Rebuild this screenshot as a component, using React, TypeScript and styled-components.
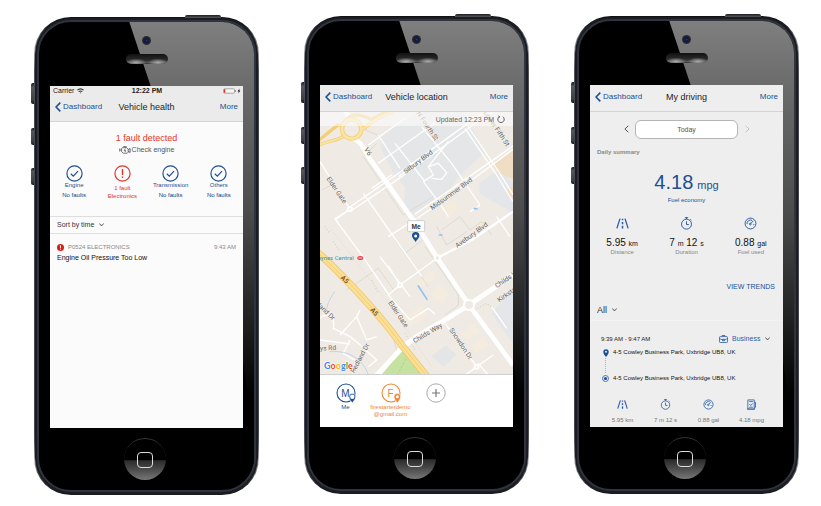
import React from 'react';
import styled, { createGlobalStyle } from 'styled-components';

const BLUE = '#1c4f94';
const RED = '#e2352a';
const ORANGE = '#ee8532';

const GlobalStyle = createGlobalStyle`
  *, *::before, *::after { box-sizing: border-box; }
  body {
    margin: 0;
    background: #fff;
    color: #222;
    font-family: "Liberation Sans", Arial, Helvetica, sans-serif;
  }
  button, select {
    margin: 0;
    padding: 0;
    border: 0;
    background: none;
    font: inherit;
    color: inherit;
  }
  svg { display: block; flex: none; }
  h1, h2, p, ul, dl, dd, dt { margin: 0; padding: 0; font-weight: 400; }
  ul { list-style: none; }
`;

/* ---------- device ---------- */

const Page = styled.main`
  display: flex;
  align-items: flex-start;
  gap: 45px;
  padding: 16px 22px 12px 34px;
`;

const Device = styled.article<{ $lowered?: boolean }>`
  position: relative;
  flex: 1 1 0;
  min-width: 0;
  margin-top: ${(p) => (p.$lowered ? '1px' : '0')};
  padding: 3px;
  border-radius: 37px;
  background: linear-gradient(
    #101114 0, #1b1c20 2%, #5e6066 4%, #a5a7ab 7%, #55585f 11%, #45484f 18%,
    #45484f 86%, #55585f 89%, #b0b1b4 93%, #4a4b50 96%, #1b1a1e 99%
  );
`;

const SideKey = styled.span<{ $top: number; $size: number }>`
  position: absolute;
  left: -3px;
  top: ${(p) => p.$top}px;
  width: 3px;
  height: ${(p) => p.$size}px;
  border-radius: 2px 0 0 2px;
  background: linear-gradient(#17181b, #55585e 20%, #3d4046 80%, #17181b);
`;

const PowerKey = styled.span`
  position: absolute;
  right: 38px;
  top: -2px;
  width: 36px;
  height: 3px;
  border-radius: 2px 2px 0 0;
  background: linear-gradient(#1d1e22, #55585d);
`;

const Bezel = styled.div`
  position: relative;
  padding: 0 11px;
  border: 2px solid #30343f;
  border-radius: 34px;
  background: #000;
  box-shadow: 0 0 0 2px #1b1d22;
  overflow: hidden;

  &::before {
    content: '';
    position: absolute;
    inset: 0;
    background: linear-gradient(#7f7f7f, #6b6b6b 14%, #4d4d4d 40%, #242424 62%, #000 80%);
    clip-path: polygon(42% 0, 100% 0, 100% 100%, 97% 80%, 95% 73%);
  }
`;

const Head = styled.div`
  position: relative;
  display: flex;
  flex-direction: column;
  align-items: center;
  gap: 9px;
  height: 64px;
  padding-top: 14px;
`;

const Camera = styled.span`
  width: 9px;
  height: 9px;
  border-radius: 50%;
  background: radial-gradient(circle, #2335a0 0, #10153f 25%, #1d1f29 45%, #30313a 70%);
`;

const Speaker = styled.span`
  width: 42px;
  height: 10px;
  border-radius: 5px;
  background:
    radial-gradient(ellipse 10px 4px at 24% 85%, #a8a8a8, transparent),
    radial-gradient(ellipse 10px 4px at 76% 85%, #a8a8a8, transparent),
    linear-gradient(#111 0, #2a2a2a 60%, #555 85%, #333);
`;

const Foot = styled.div`
  position: relative;
  display: grid;
  place-items: center;
  height: 62px;
  padding-right: 3px;
`;

const HomeKey = styled.button`
  display: grid;
  place-items: center;
  width: 42px;
  height: 42px;
  border-radius: 50%;
  border-top: 1px solid #333;
  background: linear-gradient(#000 0 50%, #2c2c2c 53%, #444 70%, #777 100%);

  &::after {
    content: '';
    width: 16px;
    height: 16px;
    border: 1px solid #ddd;
    border-radius: 4px;
  }
`;

const Screen = styled.section<{ $tone: string }>`
  position: relative;
  display: flex;
  flex-direction: column;
  min-height: 342px;
  background: ${(p) => p.$tone};
`;

const Phone = ({
  tone,
  lowered,
  label,
  children,
}: {
  tone: string;
  lowered?: boolean;
  label: string;
  children: React.ReactNode;
}) => (
  <Device $lowered={lowered}>
    <PowerKey />
    <SideKey $top={66} $size={21} />
    <SideKey $top={111} $size={17} />
    <SideKey $top={151} $size={17} />
    <Bezel>
      <Head>
        <Camera />
        <Speaker />
      </Head>
      <Screen $tone={tone} aria-label={label}>
        {children}
      </Screen>
      <Foot>
        <HomeKey type="button" aria-label="Home" />
      </Foot>
    </Bezel>
  </Device>
);

/* ---------- navigation ---------- */

const StatusBar = styled.div`
  display: grid;
  grid-template-columns: 1fr auto 1fr;
  align-items: center;
  height: 9px;
  padding: 0 2px 0 3px;
  background: #ebebeb;
  color: #222;
  font-size: 7px;
  line-height: 9px;

  b { font-size: 7px; }
`;

const StatusSide = styled.span<{ $end?: boolean }>`
  display: flex;
  align-items: center;
  gap: 3px;
  justify-content: ${(p) => (p.$end ? 'flex-end' : 'flex-start')};
`;

const NavBar = styled.header<{ $tone?: string }>`
  display: grid;
  grid-template-columns: 1fr auto 1fr;
  align-items: center;
  height: 27px;
  padding: 0 5px 2px;
  border-bottom: 1px solid #d4d4d6;
  background: ${(p) => p.$tone ?? '#ebebeb'};
`;

const NavTitle = styled.h1`
  font-size: 9px;
  line-height: 12px;
  color: #1c1c1c;
`;

const NavLink = styled.a<{ $end?: boolean }>`
  display: flex;
  align-items: center;
  gap: 2px;
  justify-self: ${(p) => (p.$end ? 'end' : 'start')};
  color: ${BLUE};
  font-size: 8px;
  line-height: 12px;
  text-decoration: none;
`;

const Nav = ({ title, tone }: { title: string; tone?: string }) => (
  <NavBar $tone={tone}>
    <NavLink href="#dashboard">
      <svg width="6" height="10" viewBox="0 0 6 10" fill="none" stroke={BLUE} strokeWidth="1.6">
        <path d="M5.3.6 1 5l4.3 4.4" />
      </svg>
      Dashboard
    </NavLink>
    <NavTitle>{title}</NavTitle>
    <NavLink $end href="#more">More</NavLink>
  </NavBar>
);

const Chevron = ({ color = '#333' }: { color?: string }) => (
  <svg width="5" height="4" viewBox="0 0 5 4" fill="none" stroke={color} strokeWidth="1">
    <path d="M.4.8c1 .9 1.300 1.300 2.100 1.600C3.300 2.100 3.700 1.700 4.600.8" />
  </svg>
);

const Picker = styled.label<{ $size?: number; $color?: string }>`
  display: inline-flex;
  align-items: center;
  gap: 4px;
  color: ${(p) => p.$color ?? '#333'};
  font-size: ${(p) => p.$size ?? 7}px;
  line-height: 10px;

  select {
    appearance: none;
    outline: 0;
  }
`;

/* ---------- vehicle health ---------- */

const Summary = styled.div`
  display: flex;
  flex-direction: column;
  align-items: center;
  gap: 1px;
  padding-top: 10px;
`;

const Alert = styled.h2`
  color: ${RED};
  font-size: 9px;
  line-height: 12px;
`;

const Hint = styled.p`
  display: flex;
  align-items: center;
  gap: 1px;
  color: #555;
  font-size: 7px;
  line-height: 10px;
`;

const Systems = styled.ul`
  display: grid;
  grid-template-columns: repeat(4, 1fr);
  height: 51px;
  margin-top: 10px;
`;

const System = styled.li<{ $fault?: boolean }>`
  display: flex;
  flex-direction: column;
  align-items: center;
  gap: ${(p) => (p.$fault ? '0' : '2px')};
  color: ${(p) => (p.$fault ? RED : BLUE)};
  font-size: 6px;
  line-height: 8px;

  svg { margin-bottom: ${(p) => (p.$fault ? '2px' : '-3px')}; }
  span:last-child { color: ${(p) => (p.$fault ? RED : '#0f3d80')}; }
`;

const SortRow = styled.div`
  display: flex;
  align-items: center;
  height: 18px;
  padding-left: 7px;
  border-top: 1px solid #dedee0;
  border-bottom: 1px solid #dedee0;
`;

const Fault = styled.div`
  display: grid;
  gap: 1px;
  padding: 8px 7px 0;
`;

const FaultMeta = styled.div`
  display: flex;
  align-items: center;
  gap: 4px;
  color: #888;
  font-size: 6px;
  line-height: 10px;

  time { margin-left: auto; }
`;

const FaultTitle = styled.h2`
  color: #111;
  font-size: 7px;
  line-height: 9px;
`;

const SystemMark = ({ fault }: { fault?: boolean }) => (
  <svg width="17" height="17" viewBox="0 0 17 17" fill="none" stroke={fault ? RED : BLUE} strokeWidth="1.200">
    <circle cx="8.500" cy="8.500" r="7.600" />
    {fault ? <path d="M8.500 4v6M8.500 11.500v1.500" strokeWidth="1.400" /> : <path d="m4.800 8.800 2.500 2.300 4.700-5" />}
  </svg>
);

const systems = [
  { top: 'Engine', bottom: 'No faults' },
  { top: '1 fault', bottom: 'Electronics', fault: true },
  { top: 'Transmission', bottom: 'No faults' },
  { top: 'Others', bottom: 'No faults' },
];

const HealthScreen = () => (
  <Phone tone="#fbfbfb" lowered label="Vehicle health">
    <StatusBar>
      <StatusSide>
        Carrier
        <svg width="7" height="6" viewBox="0 0 7 6" fill="none" stroke="#333" strokeWidth="1.100">
          <path d="M.4 2.200c2-1.800 4.200-1.800 6.200 0M1.700 3.700c1.200-1 2.400-1 3.600 0" />
          <path d="M2.700 4.500h1.600L3.500 5.600z" fill="#333" stroke="none" />
        </svg>
      </StatusSide>
      <b>12:22 PM</b>
      <StatusSide $end>
        <svg width="18" height="6" viewBox="0 0 18 6">
          <rect x=".5" y=".8" width="11" height="4.400" rx="1" fill="#f6f6f6" stroke="#888" strokeWidth=".7" />
          <path d="M1 1.200h1.300v3.600H1z" fill={RED} />
          <path d="M12.200 2.200h.8v1.600h-.8z" fill="#666" />
          <path d="m16.500.6-1.900 2.800h1.200l-.4 2 1.900-2.800h-1.200z" fill="#111" />
        </svg>
      </StatusSide>
    </StatusBar>
    <Nav title="Vehicle health" />
    <Summary>
      <Alert>1 fault detected</Alert>
      <Hint>
        <svg width="12" height="8" viewBox="0 0 12 8" fill="none" stroke="#555" strokeWidth=".8">
          <path d="M4.300.6h3.400M6 .6v1M3.200 1.700h4.600l1.400 1.500v3l-1 1H4.300L2.600 5.600V2.400zM2.600 4H.8M.7 2.500v3M9.200 3.500h1v-.8h1v3.600h-1v-.8h-1" />
          <path d="m6.300 2.700-1 1.800h1.300l-.6 1.600" />
        </svg>
        Check engine
      </Hint>
    </Summary>
    <Systems>
      {systems.map((s) => (
        <System key={s.top} $fault={s.fault}>
          <SystemMark fault={s.fault} />
          <span>{s.top}</span>
          <span>{s.bottom}</span>
        </System>
      ))}
    </Systems>
    <SortRow>
      <Picker>
        <select aria-label="Sort faults">
          <option>Sort by time</option>
        </select>
        <Chevron />
      </Picker>
    </SortRow>
    <Fault>
      <FaultMeta>
        <svg width="7" height="7" viewBox="0 0 7 7">
          <circle cx="3.500" cy="3.500" r="3.500" fill="#d8201a" />
          <path d="M3.500 1.300v2.700M3.500 4.700v1" stroke="#fff" strokeWidth="1" />
        </svg>
        P0524 ELECTRONICS
        <time>9:43 AM</time>
      </FaultMeta>
      <FaultTitle>Engine Oil Pressure Too Low</FaultTitle>
    </Fault>
  </Phone>
);

/* ---------- vehicle location ---------- */

const MapArea = styled.div`
  position: relative;
  height: 262px;
  background: #efebe4;
`;

const MapStatus = styled.div`
  position: absolute;
  inset: 0 0 auto;
  display: flex;
  align-items: center;
  justify-content: flex-end;
  gap: 3px;
  height: 14px;
  padding-right: 8px;
  background: rgba(250, 250, 250, 0.65);
  color: #666;
  font-size: 7px;
`;

const People = styled.div`
  display: flex;
  align-items: flex-start;
  flex: 1;
  padding: 8px 0 0 3px;
  border-top: 1px solid #d0d0d0;
  background: #fff;
`;

const Person = styled.button<{ $color: string }>`
  display: flex;
  flex-direction: column;
  align-items: center;
  flex: 0 0 45px;
  color: ${(p) => p.$color};
  font-size: 6px;
  line-height: 7px;
`;

const Avatar = ({ letter, color, hollow }: { letter: string; color: string; hollow?: boolean }) => (
  <svg width="22" height="21" viewBox="0 0 22 21">
    <circle cx="11" cy="10" r="9" fill="#fff" stroke={color} strokeWidth="1.100" />
    <text x="10.500" y="13.500" fontSize="10" textAnchor="middle" fill={color}>{letter}</text>
    <path
      d="M17.300 19.800c-2.100-2.500-3.300-4.200-3.300-6a3.300 3.300 0 0 1 6.600 0c0 1.800-1.200 3.500-3.300 6z"
      fill={color}
      stroke="#fff"
      strokeWidth=".5"
    />
    <circle cx="17.300" cy="13.800" r={hollow ? 2.2 : 1.5} fill="#fff" />
  </svg>
);

const MapLabel = styled.text`
  font-family: Roboto, "Liberation Sans", sans-serif;
  font-size: 20px;
  fill: #666;
  stroke: #f4f1ec;
  stroke-width: 3px;
  paint-order: stroke;
`;

const labels: [string, number, number, number][] = [
  ['N Fourth St', 304, 10, 56],
  ['Lower Fifth St', 505, 8, 56],
  ['V6', 147, 118, 58],
  ['Silbury Blvd', 272, 192, -37],
  ['Elder Gate', 34, 206, 56],
  ['Midsummer Blvd', 352, 301, -36],
  ['Avebury Blvd', 427, 414, -36],
  ['Elder Gate', 219, 578, 56],
  ['Childs Way', 299, 700, -31],
  ['Childs Way', 546, 535, -35],
  ['Kirkstall Pl', 553, 577, -35],
  ['Snowdon Dr', 402, 660, 56],
  ['Redland Dr', 118, 790, -62],
  ['Portland Dr', -20, 562, 44],
  ['Serpys Rd', -25, 723, -2],
];

const CityMap = () => (
  <svg width="100%" height="100%" viewBox="15 6 579 786" preserveAspectRatio="xMidYMid slice" role="img" aria-label="Street map">
    <rect x="-200" y="0" width="1000" height="800" fill="#efebe4" />
    <path d="M195 78 315 3h130l65 125-70 62-40 55-125 80-8-35 3-60-35-40-35-70z" fill="#e5e6e7" />
    <path d="M492 220l60-40 42 35v95l-100-60zM528 610l66-70v160z" fill="#e5e6e9" />
    <path d="M527 162l67-44v90l-44-20zM572 245l22-20v40z" fill="#f0dec4" />
    <path d="M380 290l30-20 22 26-34 25zM350 735l44-30 30 20-40 44z" fill="#f3ebdc" />
    <path d="M265 625l55-38 20 28-54 36zM345 550l28-26 28 26-20 34zM305 515l48-30 12 18-46 30zM440 670l38-30 15 25-36 28zM470 705l35-24 14 24-38 25z" fill="#f4eddf" />
    <path d="M350 738l44-32 30 28-38 36z" fill="#e4e5e7" />
    <g fill="none" stroke="#d6d1c5" strokeWidth="2">
      <path d="M150 60l45 18M20 240l30-15M185 100l-40 40 120 175 90-55M240 390l100 140M365 350l30 55 60-40M270 430l60-45M95 540l95-65 50 70M380 360l55-40 30 40 35-25 30 40M140 550l90 120 15 50M330 410l100 145 0 30-40 30" />
      <path d="M50 360l170 220 130 190" strokeDasharray="3 5" />
      <path d="M30 350l15 20M55 395l20 30M170 510l20 40M270 670l30 50M480 600l35-20 20 15" strokeWidth="4" strokeDasharray="3 6" />
    </g>
    <g fill="none" stroke="#fff" strokeWidth="4">
      <path d="M15 155l90 142M105 297l-45 30 85 115 75 110M145 250l175 250M170 235l60-40M160 105l110-80M190 75l65 100M240 100l90 115M320 50l90 110M190 160l195-140M250 200l70-50M325 215l45 60M325 215l30-20-15-25 30-10 25 28-15 20-30-3M370 275l30 45M410 160l85 125M340 170l60-75M450 55l95 140 49 80M458 48l95 140 41 66M495 285l-30 20M545 320l40 60M195 440l90 120M255 525l-35-58M220 555l65 75 55-35M340 595l20 18M390 640l95 130M485 770l-40 30M485 770l50-35M490 760l50 60M530 590l45 65" />
      <path d="M60 330l45-33M105 291 250 190 480 25 520 0M112 300 260 200 490 34 540 0M220 380l85-55M300 312 420 230 594 108M308 324 430 240 594 118M220 555l35-30 112-81" />
      <path d="M15 625c30-25 45 0 40 30l50 25 25 20M75 675l50-55 30 70 30-10M15 690l90 12M125 620l10-20M105 690l-20 40 50 30M130 700l55 50-25 20" />
    </g>
    <path d="M265 715 200 795h140z" fill="#c6e2a0" />
    <path d="M275 735l-6 20-22 40" fill="none" stroke="#a5c584" strokeWidth="2" strokeDasharray="7 5" />
    <g fill="none" stroke="#fff">
      <path d="M367 444 470 390 594 305" strokeWidth="7" />
      <path d="M90 3l20 30M110 85c30 8 35 30 50 55l145 205 62 99 95 141 132 180" strokeWidth="14" />
      <path d="M170 812l90-97c30-30 75-53 117-77l85-53 140-96" strokeWidth="15" />
    </g>
    <g fill="#efebe4" stroke="#fff" strokeWidth="6">
      <circle cx="462" cy="585" r="15" />
      <circle cx="367" cy="444" r="8" />
      <circle cx="255" cy="525" r="6" />
      <circle cx="105" cy="297" r="6" />
      <circle cx="485" cy="770" r="6" />
    </g>
    <g fill="none" strokeLinecap="round">
      <path d="M10 106c30-15 50-12 72-25M10 92l60-48M138 60c30-15 40-38 90-52M78 48c25-40 50-40 90-20l50-25" stroke="#f1cf78" strokeWidth="10" />
      <circle cx="110" cy="57" r="29" stroke="#f1cf78" strokeWidth="13" />
      <path d="M10 106c30-15 50-12 72-25M138 60c30-15 40-38 90-52" stroke="#fbe3a0" strokeWidth="6" />
      <circle cx="110" cy="57" r="29" stroke="#fbe3a0" strokeWidth="8" />
      <path d="M5 425c30 25 170 160 255 280l80 100" stroke="#eec76b" strokeWidth="22" />
      <path d="M5 425c30 25 170 160 255 280l80 100" stroke="#fbdf95" strokeWidth="17" />
      <path d="M5 425c30 25 170 160 255 280l80 100" stroke="#eec76b" strokeWidth="2" />
      <path d="M310 528l26 40M478 296h8M373 375h8" stroke="#8fc3f4" strokeWidth="5" />
      <path d="M58 545c-10 20-20 30-24 55M45 725c60-5 100 25 115 70" stroke="#a8c8ea" strokeWidth="2" />
    </g>
    {labels.map(([text, x, y, angle]) => (
      <MapLabel key={text + x} transform={`translate(${x} ${y}) rotate(${angle})`}>{text}</MapLabel>
    ))}
    <g fontFamily="Roboto, sans-serif" fontSize="20" fontWeight="700" fill="#7d5421" stroke="#fbdf95" strokeWidth="3" paintOrder="stroke">
      <text transform="translate(76 504) rotate(45)">A5</text>
      <text transform="translate(165 600) rotate(50)">A5</text>
    </g>
    <text x="-58" y="451" fontFamily="Roboto, sans-serif" fontSize="18" fill="#2f9cb8">Milton Keynes Central</text>
    <ellipse cx="136" cy="444" rx="9" ry="6" fill="#e4313c" />
    <path d="M130 442h12M130 446h12" stroke="#fff" strokeWidth="1.500" />
    <text x="27" y="776" fontSize="27" fontFamily="Lato, sans-serif" fontWeight="700" stroke="#fff" strokeWidth="3" paintOrder="stroke">
      <tspan fill="#4285f4">G</tspan>
      <tspan fill="#ea4335">o</tspan>
      <tspan fill="#f2b400">o</tspan>
      <tspan fill="#4285f4">g</tspan>
      <tspan fill="#34a853">l</tspan>
      <tspan fill="#ea4335">e</tspan>
    </text>
    <rect x="278" y="332" width="51" height="33" rx="3" fill="#fff" stroke="#bbb" strokeWidth="2" />
    <text x="303" y="356" fontSize="20" fontWeight="700" textAnchor="middle" fill="#333">Me</text>
    <path d="M302 396c-7-11-11-14-11-19a11 11 0 0 1 22 0c0 5-4 8-11 19z" fill={BLUE} />
    <circle cx="302" cy="378" r="4.500" fill="#fff" />
  </svg>
);

const LocationScreen = () => (
  <Phone tone="#fff" label="Vehicle location">
    <Nav title="Vehicle location" />
    <MapArea>
      <CityMap />
      <MapStatus>
        Updated 12:23 PM
        <svg width="8" height="8" viewBox="0 0 8 8" fill="none" stroke="#555" strokeWidth=".9">
          <path d="M2.200 1.700a3.200 3.200 0 1 0 3.600 0M1.300.9l1.200.6-.4 1.300" />
        </svg>
      </MapStatus>
    </MapArea>
    <People>
      <Person type="button" $color={BLUE}>
        <Avatar letter="M" color={BLUE} hollow />
        Me
      </Person>
      <Person type="button" $color={ORANGE}>
        <Avatar letter="F" color={ORANGE} />
        firestarterdemo
        <br />
        @gmail.com
      </Person>
      <Person type="button" $color="#888" aria-label="Add person">
        <svg width="22" height="21" viewBox="0 0 22 21" fill="none" stroke="#aaa">
          <circle cx="11" cy="10" r="9.200" />
          <path d="M7 10h8M11 6v8" stroke="#777" strokeWidth="1.200" />
        </svg>
      </Person>
    </People>
  </Phone>
);

/* ---------- my driving ---------- */

const DayRow = styled.div`
  display: grid;
  grid-template-columns: 36px 1fr 36px;
  align-items: center;
  height: 34px;
  padding: 0 9px;

  button { display: grid; place-items: center; }
  button:first-child { padding-left: 18px; }
  button:last-child { padding-right: 18px; }
`;

const Day = styled.button`
  height: 19px;
  border: 1px solid #b4b4b4;
  border-radius: 6px;
  background: #fff;
  color: #555;
  font-size: 7px;
`;

const SectionName = styled.h2`
  padding-left: 7px;
  color: #888;
  font-size: 6px;
  font-weight: 700;
  line-height: 12px;
`;

const Economy = styled.div`
  display: flex;
  flex-direction: column;
  align-items: center;
  padding-top: 13px;
  color: ${BLUE};
  font-size: 6px;
  line-height: 8px;

  p { font-size: 20px; line-height: 22px; }
  small { margin-left: 4px; font-size: 11px; }
`;

const Totals = styled.dl`
  display: grid;
  grid-template-columns: repeat(3, 1fr);
  padding-top: 13px;
`;

const Total = styled.div`
  display: flex;
  flex-direction: column;
  align-items: center;

  dd { order: 1; margin-top: 8px; color: #111; font-size: 10px; line-height: 10px; }
  dt { order: 2; color: #888; font-size: 6px; line-height: 8px; }
  small { font-size: 7px; line-height: 1; }
`;

const Trends = styled.a`
  align-self: flex-end;
  margin: 25px 8px 0 0;
  color: ${BLUE};
  font-size: 7px;
  line-height: 12px;
  text-decoration: none;
`;

const FilterRow = styled.div`
  display: flex;
  padding: 12px 7px 0;
`;

const Trip = styled.div`
  margin-top: 5px;
  padding: 13px 10px 2px 11px;
  border-top: 1px solid #f3f3f3;
`;

const TripHead = styled.div`
  display: flex;
  align-items: center;
  justify-content: space-between;
  padding-right: 3px;
  color: #222;
  font-size: 6px;
  line-height: 10px;
`;

const Stops = styled.div`
  display: grid;
  grid-template-columns: 9px 1fr;
  column-gap: 3px;
  align-items: center;
  padding-top: 3px;
  color: #111;
  font-size: 6px;
  line-height: 11px;

  > svg { justify-self: center; }
`;

const Dots = styled.span`
  grid-column: 1 / -1;
  width: 1px;
  height: 15px;
  margin-left: 4px;
  border-left: 1px dotted #9db4d6;
`;

const TripStats = styled.ul`
  display: grid;
  grid-template-columns: repeat(4, 1fr);
  padding-top: 15px;

  li {
    display: flex;
    flex-direction: column;
    align-items: center;
    gap: 6px;
    color: #777;
    font-size: 6px;
    line-height: 9px;
  }
`;

type IconName = 'road' | 'clock' | 'gauge' | 'pump';

const paths: Record<IconName, React.ReactNode> = {
  road: (
    <>
      <path d="M3.700 1.500.8 10.500M8.300 1.500l2.900 9" strokeWidth="1.200" />
      <path d="M6 1.500v1.500M6 4.600v2M6 8v2.500" strokeWidth="1.400" />
    </>
  ),
  clock: (
    <>
      <circle cx="6" cy="6.600" r="4.600" />
      <path d="M4.500.6h3M6 .6V2M6 4v3h2.200M9.500 2.100l1 1" />
    </>
  ),
  gauge: (
    <>
      <circle cx="6" cy="6" r="5" />
      <circle cx="5.800" cy="6.500" r=".8" />
      <path d="m6.300 6 2.300-2.500M2.800 6.500a3.200 3.200 0 0 1 4.700-3.300M9.200 6.500l-.3 1" />
    </>
  ),
  pump: (
    <>
      <path d="M2 1h7v10H2zM9 3.500h1.400v5.500H9M1 11h9" />
      <path d="M3.500 2.800h4M3.800 5.500l1.500 1.700 2-2.400M3.500 9h4" />
    </>
  ),
};

const Icon = ({ name, size }: { name: IconName; size: number }) => (
  <svg width={size} height={size} viewBox="0 0 12 12" fill="none" stroke="#2a5da6" strokeWidth=".9">
    {paths[name]}
  </svg>
);

const DrivingScreen = () => (
  <Phone tone="#eeeeee" label="My driving">
    <Nav title="My driving" tone="#eeeeee" />
    <DayRow>
      <button type="button" aria-label="Previous day">
        <svg width="5" height="8" viewBox="0 0 5 8" fill="none" stroke="#555"><path d="M4.300.8.9 4l3.400 3.200" /></svg>
      </button>
      <Day type="button">Today</Day>
      <button type="button" aria-label="Next day">
        <svg width="5" height="8" viewBox="0 0 5 8" fill="none" stroke="#c4c4c4"><path d="M.7.8 4.100 4 .7 7.200" /></svg>
      </button>
    </DayRow>
    <SectionName>Daily summary</SectionName>
    <Economy>
      <p>4.18<small>mpg</small></p>
      Fuel economy
    </Economy>
    <Totals>
      <Total>
        <Icon name="road" size={13} />
        <dt>Distance</dt>
        <dd>5.95 <small>km</small></dd>
      </Total>
      <Total>
        <Icon name="clock" size={13} />
        <dt>Duration</dt>
        <dd>7 <small>m</small> 12 <small>s</small></dd>
      </Total>
      <Total>
        <Icon name="gauge" size={13} />
        <dt>Fuel used</dt>
        <dd>0.88 <small>gal</small></dd>
      </Total>
    </Totals>
    <Trends href="#trends">VIEW TRENDS</Trends>
    <FilterRow>
      <Picker $size={9}>
        <select aria-label="Trip filter">
          <option>All</option>
        </select>
        <Chevron />
      </Picker>
    </FilterRow>
    <Trip>
      <TripHead>
        <span>9:39 AM - 9:47 AM</span>
        <Picker $color="#2a5da6">
          <svg width="9" height="8" viewBox="0 0 9 8" fill="none" stroke="#2a5da6" strokeWidth=".8">
            <rect x=".5" y="1.600" width="8" height="5.900" rx=".8" />
            <path d="M3 1.500V.5h3v1M.5 3.500 3.500 5h2l3-1.500M3.500 4.300h2v1.400h-2z" />
          </svg>
          <select aria-label="Trip type">
            <option>Business</option>
          </select>
          <Chevron />
        </Picker>
      </TripHead>
      <Stops>
        <svg width="6" height="8" viewBox="0 0 6 8">
          <path d="M3 8C1.200 5.500.3 4.300.3 2.900a2.700 2.700 0 0 1 5.400 0C5.700 4.300 4.800 5.500 3 8z" fill={BLUE} />
          <circle cx="3" cy="2.800" r="1" fill="#eee" />
        </svg>
        <span>4-5 Cowley Business Park, Uxbridge UB8, UK</span>
        <Dots />
        <svg width="7" height="7" viewBox="0 0 7 7">
          <circle cx="3.500" cy="3.500" r="3" fill="none" stroke="#2a5da6" strokeWidth=".8" />
          <circle cx="3.500" cy="3.500" r="1.600" fill={BLUE} />
        </svg>
        <span>4-5 Cowley Business Park, Uxbridge UB8, UK</span>
      </Stops>
      <TripStats>
        <li><Icon name="road" size={11} />5.95 km</li>
        <li><Icon name="clock" size={11} />7 m 12 s</li>
        <li><Icon name="gauge" size={11} />0.88 gal</li>
        <li><Icon name="pump" size={11} />4.18 mpg</li>
      </TripStats>
    </Trip>
  </Phone>
);

export default function App() {
  return (
    <>
      <GlobalStyle />
      <Page>
        <HealthScreen />
        <LocationScreen />
        <DrivingScreen />
      </Page>
    </>
  );
}
